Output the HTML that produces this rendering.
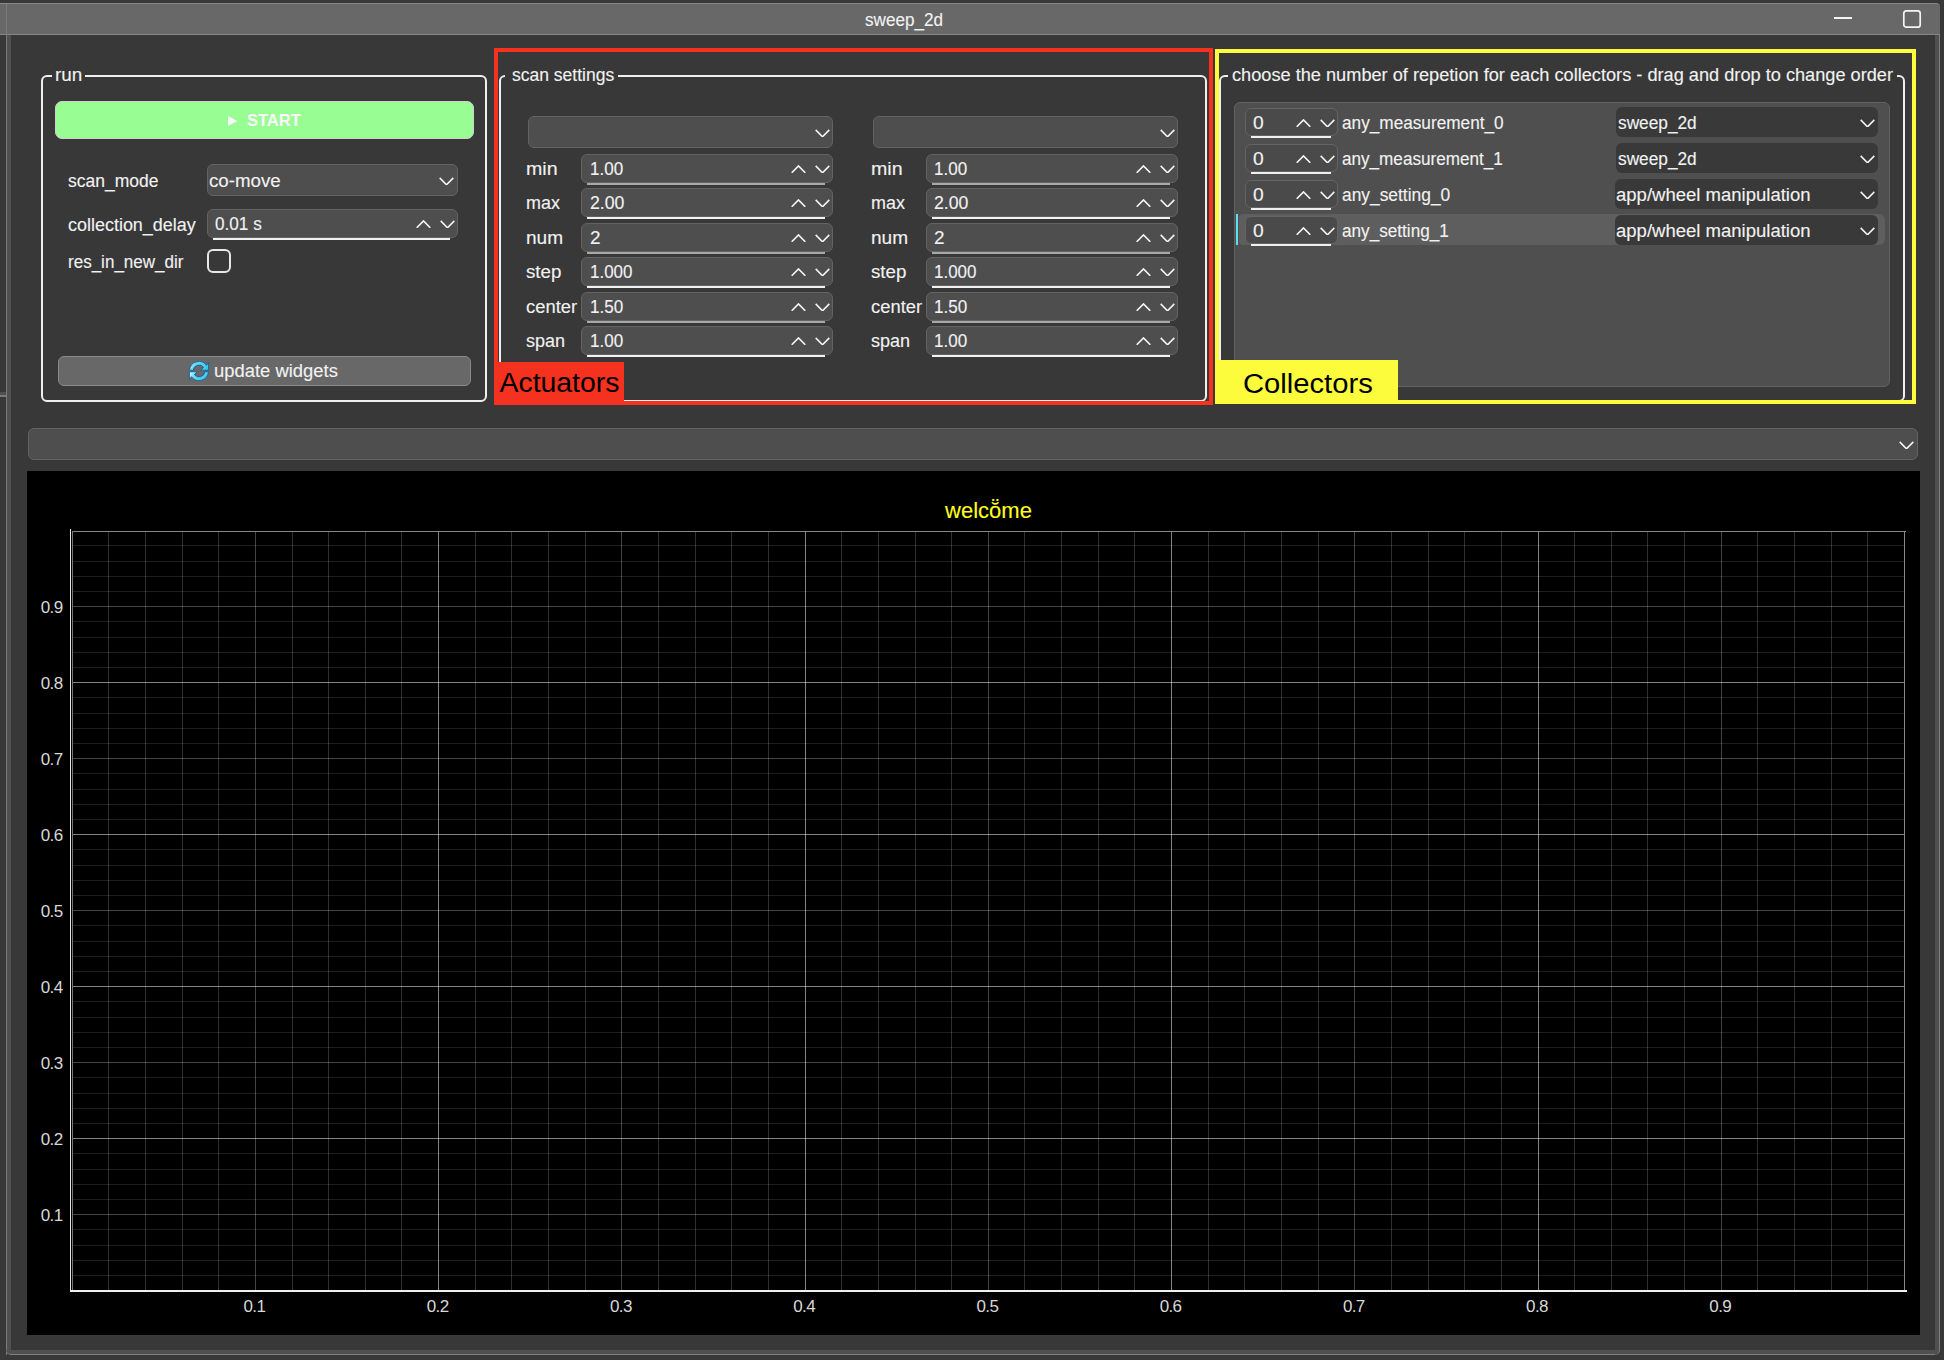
<!DOCTYPE html><html><head><meta charset="utf-8"><style>html,body{margin:0;padding:0;background:#383838;overflow:hidden}#root{position:relative;width:1944px;height:1360px;overflow:hidden;background:#383838;font-family:"Liberation Sans", sans-serif;} .w{-webkit-text-stroke:0.12px currentColor;}</style></head><body><div id="root">
<div style="position:absolute;left:0px;top:3px;width:1940px;height:32px;box-sizing:border-box;background:#686868;border-top:1px solid #878787;border-bottom:1px solid #858585;border-top-right-radius:4px;"></div>
<div style="position:absolute;left:6px;top:4px;width:1px;height:1351px;background:#7a7a7a;"></div>
<div style="position:absolute;left:7px;top:35px;width:4px;height:1316px;background:#505050;"></div>
<div style="position:absolute;left:6px;top:1350px;width:1933px;height:5px;box-sizing:border-box;background:#505050;border-bottom:1px solid #7e7e7e;border-bottom-left-radius:6px;border-bottom-right-radius:6px;"></div>
<div style="position:absolute;left:1935px;top:35px;width:5px;height:1320px;box-sizing:border-box;background:#505050;border-right:1px solid #7e7e7e;border-bottom-right-radius:6px;"></div>
<div style="position:absolute;left:0px;top:392px;width:6px;height:3px;background:#505050;"></div>
<div style="position:absolute;left:0px;top:395px;width:6px;height:2px;background:#7a7a7a;"></div>
<div class="w" style="position:absolute;left:703.5px;width:400px;top:9.61px;font-size:18px;line-height:20.7px;color:#f2f2f2;font-weight:normal;white-space:pre;text-align:center;transform-origin:50% 0;transform:scaleX(0.95);">sweep_2d</div>
<div style="position:absolute;left:1834px;top:17px;width:18px;height:2px;background:#f4f4f4;"></div>
<svg style="position:absolute;left:1902px;top:9px" width="20" height="20" viewBox="0 0 20 20"><rect x="1.8" y="1.8" width="16.4" height="16.4" rx="2.5" fill="none" stroke="#f4f4f4" stroke-width="1.7"/></svg>
<div style="position:absolute;left:41px;top:75px;width:446px;height:327px;box-sizing:border-box;border:2px solid #efefef;border-radius:6px;"></div>
<div style="position:absolute;left:52px;top:73px;width:33px;height:6px;background:#383838;"></div>
<div class="w" style="position:absolute;left:55px;top:65.07px;font-size:17.5px;line-height:20.125px;color:#f2f2f2;font-weight:normal;white-space:pre;transform-origin:0 0;transform:scaleX(1.08);">run</div>
<div style="position:absolute;left:55px;top:101px;width:419px;height:38px;box-sizing:border-box;background:#98fd92;border:1px solid #d4cfd4;border-radius:7px;"></div>
<svg style="position:absolute;left:228px;top:116px" width="10" height="10" viewBox="0 0 10 10"><path d="M0 0 L9.5 5 L0 10 Z" fill="#f7f7f7"/></svg>
<div class="w" style="position:absolute;left:247px;top:111.30px;font-size:16.5px;line-height:18.975px;color:#f7f7f7;font-weight:bold;white-space:pre;transform-origin:0 0;">START</div>
<div class="w" style="position:absolute;left:68px;top:171.17px;font-size:17.5px;line-height:20.125px;color:#f2f2f2;font-weight:normal;white-space:pre;transform-origin:0 0;">scan_mode</div>
<div style="position:absolute;left:207px;top:164px;width:251px;height:32px;box-sizing:border-box;background:#4e4e4e;border:1px solid #636363;border-radius:6px;"></div>
<svg style="position:absolute;left:438.7px;top:177.1px" width="15" height="8" viewBox="0 0 15 8"><path d="M0.7 0.9 L7.5 7.8 L14.3 0.9" fill="none" stroke="#f6f6f6" stroke-width="1.55" stroke-linecap="butt" stroke-linejoin="miter"/></svg>
<div class="w" style="position:absolute;left:209px;top:170.87px;font-size:17.5px;line-height:20.125px;color:#f2f2f2;font-weight:normal;white-space:pre;transform-origin:0 0;transform:scaleX(1.068);">co-move</div>
<div class="w" style="position:absolute;left:68px;top:214.87px;font-size:17.5px;line-height:20.125px;color:#f2f2f2;font-weight:normal;white-space:pre;transform-origin:0 0;transform:scaleX(1.026);">collection_delay</div>
<div style="position:absolute;left:207px;top:209px;width:251px;height:29px;box-sizing:border-box;background:#4e4e4e;border:1px solid #636363;border-radius:6px;"></div>
<svg style="position:absolute;left:415.5px;top:220px" width="15" height="8" viewBox="0 0 15 8"><path d="M0.7 7.8 L7.5 0.9 L14.3 7.8" fill="none" stroke="#f6f6f6" stroke-width="1.55" stroke-linecap="butt" stroke-linejoin="miter"/></svg>
<svg style="position:absolute;left:439.5px;top:220px" width="15" height="8" viewBox="0 0 15 8"><path d="M0.7 0.9 L7.5 7.8 L14.3 0.9" fill="none" stroke="#f6f6f6" stroke-width="1.55" stroke-linecap="butt" stroke-linejoin="miter"/></svg>
<div style="position:absolute;left:213px;top:238px;width:237px;height:2px;background:#f2f2f2;"></div>
<div class="w" style="position:absolute;left:215px;top:214.07px;font-size:17.5px;line-height:20.125px;color:#f2f2f2;font-weight:normal;white-space:pre;transform-origin:0 0;transform:scaleX(0.98);">0.01 s</div>
<div class="w" style="position:absolute;left:68px;top:251.87px;font-size:17.5px;line-height:20.125px;color:#f2f2f2;font-weight:normal;white-space:pre;transform-origin:0 0;transform:scaleX(0.973);">res_in_new_dir</div>
<div style="position:absolute;left:207px;top:249px;width:24px;height:24px;box-sizing:border-box;border:2px solid #e8e8e8;border-radius:6px;"></div>
<div style="position:absolute;left:58px;top:356px;width:413px;height:30px;box-sizing:border-box;background:#686868;border:1px solid #8a8a8a;border-radius:6px;"></div>
<svg style="position:absolute;left:188px;top:359.5px" width="22" height="22" viewBox="0 0 22 22"><defs><linearGradient id="rg" x1="0" y1="0" x2="1" y2="0.3"><stop offset="0" stop-color="#f4fcff"/><stop offset="0.35" stop-color="#62dcf6"/><stop offset="1" stop-color="#3ec8f0"/></linearGradient></defs><g stroke="#1d5e92" stroke-width="0.9" stroke-linejoin="miter" fill="url(#rg)"><path d="M1.5 10.3 A9.5 9.5 0 0 1 18.6 5.3 L20.6 2 L20.6 10.2 L12.6 10.2 L15.6 7.4 A5.8 5.8 0 0 0 5.2 10.3 Z"/><path d="M20.5 11.7 A9.5 9.5 0 0 1 3.4 16.7 L1.4 20 L1.4 11.8 L9.4 11.8 L6.4 14.6 A5.8 5.8 0 0 0 16.8 11.7 Z"/></g></svg>
<div class="w" style="position:absolute;left:213.5px;top:361.37px;font-size:17.5px;line-height:20.125px;color:#f2f2f2;font-weight:normal;white-space:pre;transform-origin:0 0;transform:scaleX(1.052);">update widgets</div>
<div style="position:absolute;left:499px;top:75px;width:708px;height:327px;box-sizing:border-box;border:2px solid #efefef;border-radius:6px;"></div>
<div style="position:absolute;left:505px;top:73px;width:113px;height:6px;background:#383838;"></div>
<div class="w" style="position:absolute;left:512px;top:64.87px;font-size:17.5px;line-height:20.125px;color:#f2f2f2;font-weight:normal;white-space:pre;transform-origin:0 0;">scan settings</div>
<div style="position:absolute;left:494px;top:48px;width:719px;height:357px;box-sizing:border-box;border:4px solid #f5311f;"></div>
<div style="position:absolute;left:528px;top:116px;width:305px;height:32px;box-sizing:border-box;background:#4e4e4e;border:1px solid #636363;border-radius:6px;"></div>
<svg style="position:absolute;left:814.5px;top:128.6px" width="15" height="8" viewBox="0 0 15 8"><path d="M0.7 0.9 L7.5 7.8 L14.3 0.9" fill="none" stroke="#f6f6f6" stroke-width="1.55" stroke-linecap="butt" stroke-linejoin="miter"/></svg>
<div style="position:absolute;left:873px;top:116px;width:305px;height:32px;box-sizing:border-box;background:#4e4e4e;border:1px solid #636363;border-radius:6px;"></div>
<svg style="position:absolute;left:1159.5px;top:128.6px" width="15" height="8" viewBox="0 0 15 8"><path d="M0.7 0.9 L7.5 7.8 L14.3 0.9" fill="none" stroke="#f6f6f6" stroke-width="1.55" stroke-linecap="butt" stroke-linejoin="miter"/></svg>
<div class="w" style="position:absolute;left:525.5px;top:158.87px;font-size:17.5px;line-height:20.125px;color:#f2f2f2;font-weight:normal;white-space:pre;transform-origin:0 0;transform:scaleX(1.12);">min</div>
<div style="position:absolute;left:581px;top:154px;width:252px;height:29px;box-sizing:border-box;background:#4e4e4e;border:1px solid #636363;border-radius:6px;"></div>
<svg style="position:absolute;left:790.5px;top:165px" width="15" height="8" viewBox="0 0 15 8"><path d="M0.7 7.8 L7.5 0.9 L14.3 7.8" fill="none" stroke="#f6f6f6" stroke-width="1.55" stroke-linecap="butt" stroke-linejoin="miter"/></svg>
<svg style="position:absolute;left:814.5px;top:165px" width="15" height="8" viewBox="0 0 15 8"><path d="M0.7 0.9 L7.5 7.8 L14.3 0.9" fill="none" stroke="#f6f6f6" stroke-width="1.55" stroke-linecap="butt" stroke-linejoin="miter"/></svg>
<div style="position:absolute;left:587px;top:183px;width:238px;height:2px;background:#a8a8a8;"></div>
<div class="w" style="position:absolute;left:589.5px;top:158.87px;font-size:17.5px;line-height:20.125px;color:#f2f2f2;font-weight:normal;white-space:pre;transform-origin:0 0;transform:scaleX(0.975);">1.00</div>
<div class="w" style="position:absolute;left:870.5px;top:158.87px;font-size:17.5px;line-height:20.125px;color:#f2f2f2;font-weight:normal;white-space:pre;transform-origin:0 0;transform:scaleX(1.12);">min</div>
<div style="position:absolute;left:926px;top:154px;width:252px;height:29px;box-sizing:border-box;background:#4e4e4e;border:1px solid #636363;border-radius:6px;"></div>
<svg style="position:absolute;left:1135.5px;top:165px" width="15" height="8" viewBox="0 0 15 8"><path d="M0.7 7.8 L7.5 0.9 L14.3 7.8" fill="none" stroke="#f6f6f6" stroke-width="1.55" stroke-linecap="butt" stroke-linejoin="miter"/></svg>
<svg style="position:absolute;left:1159.5px;top:165px" width="15" height="8" viewBox="0 0 15 8"><path d="M0.7 0.9 L7.5 7.8 L14.3 0.9" fill="none" stroke="#f6f6f6" stroke-width="1.55" stroke-linecap="butt" stroke-linejoin="miter"/></svg>
<div style="position:absolute;left:932px;top:183px;width:238px;height:2px;background:#a8a8a8;"></div>
<div class="w" style="position:absolute;left:934px;top:158.87px;font-size:17.5px;line-height:20.125px;color:#f2f2f2;font-weight:normal;white-space:pre;transform-origin:0 0;transform:scaleX(0.975);">1.00</div>
<div class="w" style="position:absolute;left:525.5px;top:192.87px;font-size:17.5px;line-height:20.125px;color:#f2f2f2;font-weight:normal;white-space:pre;transform-origin:0 0;transform:scaleX(1.025);">max</div>
<div style="position:absolute;left:581px;top:188px;width:252px;height:29px;box-sizing:border-box;background:#4e4e4e;border:1px solid #636363;border-radius:6px;"></div>
<svg style="position:absolute;left:790.5px;top:199px" width="15" height="8" viewBox="0 0 15 8"><path d="M0.7 7.8 L7.5 0.9 L14.3 7.8" fill="none" stroke="#f6f6f6" stroke-width="1.55" stroke-linecap="butt" stroke-linejoin="miter"/></svg>
<svg style="position:absolute;left:814.5px;top:199px" width="15" height="8" viewBox="0 0 15 8"><path d="M0.7 0.9 L7.5 7.8 L14.3 0.9" fill="none" stroke="#f6f6f6" stroke-width="1.55" stroke-linecap="butt" stroke-linejoin="miter"/></svg>
<div style="position:absolute;left:587px;top:217px;width:238px;height:2px;background:#f2f2f2;"></div>
<div class="w" style="position:absolute;left:589.5px;top:192.87px;font-size:17.5px;line-height:20.125px;color:#f2f2f2;font-weight:normal;white-space:pre;transform-origin:0 0;transform:scaleX(1.01);">2.00</div>
<div class="w" style="position:absolute;left:870.5px;top:192.87px;font-size:17.5px;line-height:20.125px;color:#f2f2f2;font-weight:normal;white-space:pre;transform-origin:0 0;transform:scaleX(1.025);">max</div>
<div style="position:absolute;left:926px;top:188px;width:252px;height:29px;box-sizing:border-box;background:#4e4e4e;border:1px solid #636363;border-radius:6px;"></div>
<svg style="position:absolute;left:1135.5px;top:199px" width="15" height="8" viewBox="0 0 15 8"><path d="M0.7 7.8 L7.5 0.9 L14.3 7.8" fill="none" stroke="#f6f6f6" stroke-width="1.55" stroke-linecap="butt" stroke-linejoin="miter"/></svg>
<svg style="position:absolute;left:1159.5px;top:199px" width="15" height="8" viewBox="0 0 15 8"><path d="M0.7 0.9 L7.5 7.8 L14.3 0.9" fill="none" stroke="#f6f6f6" stroke-width="1.55" stroke-linecap="butt" stroke-linejoin="miter"/></svg>
<div style="position:absolute;left:932px;top:217px;width:238px;height:2px;background:#f2f2f2;"></div>
<div class="w" style="position:absolute;left:934px;top:192.87px;font-size:17.5px;line-height:20.125px;color:#f2f2f2;font-weight:normal;white-space:pre;transform-origin:0 0;transform:scaleX(1.01);">2.00</div>
<div class="w" style="position:absolute;left:525.5px;top:227.87px;font-size:17.5px;line-height:20.125px;color:#f2f2f2;font-weight:normal;white-space:pre;transform-origin:0 0;transform:scaleX(1.09);">num</div>
<div style="position:absolute;left:581px;top:223px;width:252px;height:29px;box-sizing:border-box;background:#4e4e4e;border:1px solid #636363;border-radius:6px;"></div>
<svg style="position:absolute;left:790.5px;top:234px" width="15" height="8" viewBox="0 0 15 8"><path d="M0.7 7.8 L7.5 0.9 L14.3 7.8" fill="none" stroke="#f6f6f6" stroke-width="1.55" stroke-linecap="butt" stroke-linejoin="miter"/></svg>
<svg style="position:absolute;left:814.5px;top:234px" width="15" height="8" viewBox="0 0 15 8"><path d="M0.7 0.9 L7.5 7.8 L14.3 0.9" fill="none" stroke="#f6f6f6" stroke-width="1.55" stroke-linecap="butt" stroke-linejoin="miter"/></svg>
<div style="position:absolute;left:587px;top:252px;width:238px;height:2px;background:#a8a8a8;"></div>
<div class="w" style="position:absolute;left:589.5px;top:227.87px;font-size:17.5px;line-height:20.125px;color:#f2f2f2;font-weight:normal;white-space:pre;transform-origin:0 0;transform:scaleX(1.08);">2</div>
<div class="w" style="position:absolute;left:870.5px;top:227.87px;font-size:17.5px;line-height:20.125px;color:#f2f2f2;font-weight:normal;white-space:pre;transform-origin:0 0;transform:scaleX(1.09);">num</div>
<div style="position:absolute;left:926px;top:223px;width:252px;height:29px;box-sizing:border-box;background:#4e4e4e;border:1px solid #636363;border-radius:6px;"></div>
<svg style="position:absolute;left:1135.5px;top:234px" width="15" height="8" viewBox="0 0 15 8"><path d="M0.7 7.8 L7.5 0.9 L14.3 7.8" fill="none" stroke="#f6f6f6" stroke-width="1.55" stroke-linecap="butt" stroke-linejoin="miter"/></svg>
<svg style="position:absolute;left:1159.5px;top:234px" width="15" height="8" viewBox="0 0 15 8"><path d="M0.7 0.9 L7.5 7.8 L14.3 0.9" fill="none" stroke="#f6f6f6" stroke-width="1.55" stroke-linecap="butt" stroke-linejoin="miter"/></svg>
<div style="position:absolute;left:932px;top:252px;width:238px;height:2px;background:#a8a8a8;"></div>
<div class="w" style="position:absolute;left:934px;top:227.87px;font-size:17.5px;line-height:20.125px;color:#f2f2f2;font-weight:normal;white-space:pre;transform-origin:0 0;transform:scaleX(1.08);">2</div>
<div class="w" style="position:absolute;left:525.5px;top:261.87px;font-size:17.5px;line-height:20.125px;color:#f2f2f2;font-weight:normal;white-space:pre;transform-origin:0 0;transform:scaleX(1.07);">step</div>
<div style="position:absolute;left:581px;top:257px;width:252px;height:29px;box-sizing:border-box;background:#4e4e4e;border:1px solid #636363;border-radius:6px;"></div>
<svg style="position:absolute;left:790.5px;top:268px" width="15" height="8" viewBox="0 0 15 8"><path d="M0.7 7.8 L7.5 0.9 L14.3 7.8" fill="none" stroke="#f6f6f6" stroke-width="1.55" stroke-linecap="butt" stroke-linejoin="miter"/></svg>
<svg style="position:absolute;left:814.5px;top:268px" width="15" height="8" viewBox="0 0 15 8"><path d="M0.7 0.9 L7.5 7.8 L14.3 0.9" fill="none" stroke="#f6f6f6" stroke-width="1.55" stroke-linecap="butt" stroke-linejoin="miter"/></svg>
<div style="position:absolute;left:587px;top:286px;width:238px;height:2px;background:#f2f2f2;"></div>
<div class="w" style="position:absolute;left:589.5px;top:261.87px;font-size:17.5px;line-height:20.125px;color:#f2f2f2;font-weight:normal;white-space:pre;transform-origin:0 0;transform:scaleX(0.97);">1.000</div>
<div class="w" style="position:absolute;left:870.5px;top:261.87px;font-size:17.5px;line-height:20.125px;color:#f2f2f2;font-weight:normal;white-space:pre;transform-origin:0 0;transform:scaleX(1.07);">step</div>
<div style="position:absolute;left:926px;top:257px;width:252px;height:29px;box-sizing:border-box;background:#4e4e4e;border:1px solid #636363;border-radius:6px;"></div>
<svg style="position:absolute;left:1135.5px;top:268px" width="15" height="8" viewBox="0 0 15 8"><path d="M0.7 7.8 L7.5 0.9 L14.3 7.8" fill="none" stroke="#f6f6f6" stroke-width="1.55" stroke-linecap="butt" stroke-linejoin="miter"/></svg>
<svg style="position:absolute;left:1159.5px;top:268px" width="15" height="8" viewBox="0 0 15 8"><path d="M0.7 0.9 L7.5 7.8 L14.3 0.9" fill="none" stroke="#f6f6f6" stroke-width="1.55" stroke-linecap="butt" stroke-linejoin="miter"/></svg>
<div style="position:absolute;left:932px;top:286px;width:238px;height:2px;background:#f2f2f2;"></div>
<div class="w" style="position:absolute;left:934px;top:261.87px;font-size:17.5px;line-height:20.125px;color:#f2f2f2;font-weight:normal;white-space:pre;transform-origin:0 0;transform:scaleX(0.97);">1.000</div>
<div class="w" style="position:absolute;left:525.5px;top:296.87px;font-size:17.5px;line-height:20.125px;color:#f2f2f2;font-weight:normal;white-space:pre;transform-origin:0 0;transform:scaleX(1.05);">center</div>
<div style="position:absolute;left:581px;top:292px;width:252px;height:29px;box-sizing:border-box;background:#4e4e4e;border:1px solid #636363;border-radius:6px;"></div>
<svg style="position:absolute;left:790.5px;top:303px" width="15" height="8" viewBox="0 0 15 8"><path d="M0.7 7.8 L7.5 0.9 L14.3 7.8" fill="none" stroke="#f6f6f6" stroke-width="1.55" stroke-linecap="butt" stroke-linejoin="miter"/></svg>
<svg style="position:absolute;left:814.5px;top:303px" width="15" height="8" viewBox="0 0 15 8"><path d="M0.7 0.9 L7.5 7.8 L14.3 0.9" fill="none" stroke="#f6f6f6" stroke-width="1.55" stroke-linecap="butt" stroke-linejoin="miter"/></svg>
<div style="position:absolute;left:587px;top:321px;width:238px;height:2px;background:#a8a8a8;"></div>
<div class="w" style="position:absolute;left:589.5px;top:296.87px;font-size:17.5px;line-height:20.125px;color:#f2f2f2;font-weight:normal;white-space:pre;transform-origin:0 0;transform:scaleX(0.975);">1.50</div>
<div class="w" style="position:absolute;left:870.5px;top:296.87px;font-size:17.5px;line-height:20.125px;color:#f2f2f2;font-weight:normal;white-space:pre;transform-origin:0 0;transform:scaleX(1.05);">center</div>
<div style="position:absolute;left:926px;top:292px;width:252px;height:29px;box-sizing:border-box;background:#4e4e4e;border:1px solid #636363;border-radius:6px;"></div>
<svg style="position:absolute;left:1135.5px;top:303px" width="15" height="8" viewBox="0 0 15 8"><path d="M0.7 7.8 L7.5 0.9 L14.3 7.8" fill="none" stroke="#f6f6f6" stroke-width="1.55" stroke-linecap="butt" stroke-linejoin="miter"/></svg>
<svg style="position:absolute;left:1159.5px;top:303px" width="15" height="8" viewBox="0 0 15 8"><path d="M0.7 0.9 L7.5 7.8 L14.3 0.9" fill="none" stroke="#f6f6f6" stroke-width="1.55" stroke-linecap="butt" stroke-linejoin="miter"/></svg>
<div style="position:absolute;left:932px;top:321px;width:238px;height:2px;background:#a8a8a8;"></div>
<div class="w" style="position:absolute;left:934px;top:296.87px;font-size:17.5px;line-height:20.125px;color:#f2f2f2;font-weight:normal;white-space:pre;transform-origin:0 0;transform:scaleX(0.975);">1.50</div>
<div class="w" style="position:absolute;left:525.5px;top:330.87px;font-size:17.5px;line-height:20.125px;color:#f2f2f2;font-weight:normal;white-space:pre;transform-origin:0 0;transform:scaleX(1.03);">span</div>
<div style="position:absolute;left:581px;top:326px;width:252px;height:29px;box-sizing:border-box;background:#4e4e4e;border:1px solid #636363;border-radius:6px;"></div>
<svg style="position:absolute;left:790.5px;top:337px" width="15" height="8" viewBox="0 0 15 8"><path d="M0.7 7.8 L7.5 0.9 L14.3 7.8" fill="none" stroke="#f6f6f6" stroke-width="1.55" stroke-linecap="butt" stroke-linejoin="miter"/></svg>
<svg style="position:absolute;left:814.5px;top:337px" width="15" height="8" viewBox="0 0 15 8"><path d="M0.7 0.9 L7.5 7.8 L14.3 0.9" fill="none" stroke="#f6f6f6" stroke-width="1.55" stroke-linecap="butt" stroke-linejoin="miter"/></svg>
<div style="position:absolute;left:587px;top:355px;width:238px;height:2px;background:#f2f2f2;"></div>
<div class="w" style="position:absolute;left:589.5px;top:330.87px;font-size:17.5px;line-height:20.125px;color:#f2f2f2;font-weight:normal;white-space:pre;transform-origin:0 0;transform:scaleX(0.975);">1.00</div>
<div class="w" style="position:absolute;left:870.5px;top:330.87px;font-size:17.5px;line-height:20.125px;color:#f2f2f2;font-weight:normal;white-space:pre;transform-origin:0 0;transform:scaleX(1.03);">span</div>
<div style="position:absolute;left:926px;top:326px;width:252px;height:29px;box-sizing:border-box;background:#4e4e4e;border:1px solid #636363;border-radius:6px;"></div>
<svg style="position:absolute;left:1135.5px;top:337px" width="15" height="8" viewBox="0 0 15 8"><path d="M0.7 7.8 L7.5 0.9 L14.3 7.8" fill="none" stroke="#f6f6f6" stroke-width="1.55" stroke-linecap="butt" stroke-linejoin="miter"/></svg>
<svg style="position:absolute;left:1159.5px;top:337px" width="15" height="8" viewBox="0 0 15 8"><path d="M0.7 0.9 L7.5 7.8 L14.3 0.9" fill="none" stroke="#f6f6f6" stroke-width="1.55" stroke-linecap="butt" stroke-linejoin="miter"/></svg>
<div style="position:absolute;left:932px;top:355px;width:238px;height:2px;background:#f2f2f2;"></div>
<div class="w" style="position:absolute;left:934px;top:330.87px;font-size:17.5px;line-height:20.125px;color:#f2f2f2;font-weight:normal;white-space:pre;transform-origin:0 0;transform:scaleX(0.975);">1.00</div>
<div style="position:absolute;left:494px;top:362px;width:130px;height:43px;background:#f5311f;"></div>
<div style="position:absolute;left:499.5px;top:366.03px;font-size:28.4px;line-height:32.66px;color:#000;font-weight:normal;white-space:pre;transform-origin:0 0;">Actuators</div>
<div style="position:absolute;left:1219px;top:75px;width:686px;height:327px;box-sizing:border-box;border:2px solid #efefef;border-radius:6px;"></div>
<div style="position:absolute;left:1228px;top:73px;width:669px;height:6px;background:#383838;"></div>
<div class="w" style="position:absolute;left:1232px;top:64.87px;font-size:17.5px;line-height:20.125px;color:#f2f2f2;font-weight:normal;white-space:pre;transform-origin:0 0;transform:scaleX(1.039);">choose the number of repetion for each collectors - drag and drop to change order</div>
<div style="position:absolute;left:1234px;top:102px;width:656px;height:285px;box-sizing:border-box;background:#4f4f4f;border:1px solid #626262;border-radius:6px;"></div>
<div style="position:absolute;left:1239px;top:214px;width:1647px;height:31px;"></div>
<div style="position:absolute;left:1239px;top:214px;width:646px;height:31px;background:#5e5e5e;border-radius:4px 6px 6px 4px;"></div>
<div style="position:absolute;left:1236px;top:214px;width:2px;height:31px;background:#5ce0ee;"></div>
<div style="position:absolute;left:1245px;top:107.5px;width:93px;height:28px;box-sizing:border-box;background:#4a4a4a;border:1px solid #646464;border-radius:6px;"></div>
<svg style="position:absolute;left:1296px;top:118.5px" width="15" height="8" viewBox="0 0 15 8"><path d="M0.7 7.8 L7.5 0.9 L14.3 7.8" fill="none" stroke="#f6f6f6" stroke-width="1.55" stroke-linecap="butt" stroke-linejoin="miter"/></svg>
<svg style="position:absolute;left:1319.8px;top:118.5px" width="15" height="8" viewBox="0 0 15 8"><path d="M0.7 0.9 L7.5 7.8 L14.3 0.9" fill="none" stroke="#f6f6f6" stroke-width="1.55" stroke-linecap="butt" stroke-linejoin="miter"/></svg>
<div style="position:absolute;left:1251px;top:135.5px;width:80px;height:2px;background:#f0f0f0;"></div>
<div class="w" style="position:absolute;left:1253px;top:113.17px;font-size:17.5px;line-height:20.125px;color:#f2f2f2;font-weight:normal;white-space:pre;transform-origin:0 0;transform:scaleX(1.1);">0</div>
<div class="w" style="position:absolute;left:1341.5px;top:113.17px;font-size:17.5px;line-height:20.125px;color:#f2f2f2;font-weight:normal;white-space:pre;transform-origin:0 0;transform:scaleX(0.983);">any_measurement_0</div>
<div style="position:absolute;left:1616px;top:106.5px;width:262px;height:30px;background:#393939;border-radius:6px;"></div>
<svg style="position:absolute;left:1860px;top:118.8px" width="15" height="8" viewBox="0 0 15 8"><path d="M0.7 0.9 L7.5 7.8 L14.3 0.9" fill="none" stroke="#f6f6f6" stroke-width="1.55" stroke-linecap="butt" stroke-linejoin="miter"/></svg>
<div class="w" style="position:absolute;left:1618px;top:112.77px;font-size:17.5px;line-height:20.125px;color:#f2f2f2;font-weight:normal;white-space:pre;transform-origin:0 0;transform:scaleX(0.986);">sweep_2d</div>
<div style="position:absolute;left:1245px;top:143.5px;width:93px;height:28px;box-sizing:border-box;background:#4a4a4a;border:1px solid #646464;border-radius:6px;"></div>
<svg style="position:absolute;left:1296px;top:154.5px" width="15" height="8" viewBox="0 0 15 8"><path d="M0.7 7.8 L7.5 0.9 L14.3 7.8" fill="none" stroke="#f6f6f6" stroke-width="1.55" stroke-linecap="butt" stroke-linejoin="miter"/></svg>
<svg style="position:absolute;left:1319.8px;top:154.5px" width="15" height="8" viewBox="0 0 15 8"><path d="M0.7 0.9 L7.5 7.8 L14.3 0.9" fill="none" stroke="#f6f6f6" stroke-width="1.55" stroke-linecap="butt" stroke-linejoin="miter"/></svg>
<div style="position:absolute;left:1251px;top:171.5px;width:80px;height:2px;background:#f0f0f0;"></div>
<div class="w" style="position:absolute;left:1253px;top:149.17px;font-size:17.5px;line-height:20.125px;color:#f2f2f2;font-weight:normal;white-space:pre;transform-origin:0 0;transform:scaleX(1.1);">0</div>
<div class="w" style="position:absolute;left:1341.5px;top:149.17px;font-size:17.5px;line-height:20.125px;color:#f2f2f2;font-weight:normal;white-space:pre;transform-origin:0 0;transform:scaleX(0.978);">any_measurement_1</div>
<div style="position:absolute;left:1616px;top:142.5px;width:262px;height:30px;background:#393939;border-radius:6px;"></div>
<svg style="position:absolute;left:1860px;top:154.8px" width="15" height="8" viewBox="0 0 15 8"><path d="M0.7 0.9 L7.5 7.8 L14.3 0.9" fill="none" stroke="#f6f6f6" stroke-width="1.55" stroke-linecap="butt" stroke-linejoin="miter"/></svg>
<div class="w" style="position:absolute;left:1618px;top:148.77px;font-size:17.5px;line-height:20.125px;color:#f2f2f2;font-weight:normal;white-space:pre;transform-origin:0 0;transform:scaleX(0.986);">sweep_2d</div>
<div style="position:absolute;left:1245px;top:179.5px;width:93px;height:28px;box-sizing:border-box;background:#4a4a4a;border:1px solid #646464;border-radius:6px;"></div>
<svg style="position:absolute;left:1296px;top:190.5px" width="15" height="8" viewBox="0 0 15 8"><path d="M0.7 7.8 L7.5 0.9 L14.3 7.8" fill="none" stroke="#f6f6f6" stroke-width="1.55" stroke-linecap="butt" stroke-linejoin="miter"/></svg>
<svg style="position:absolute;left:1319.8px;top:190.5px" width="15" height="8" viewBox="0 0 15 8"><path d="M0.7 0.9 L7.5 7.8 L14.3 0.9" fill="none" stroke="#f6f6f6" stroke-width="1.55" stroke-linecap="butt" stroke-linejoin="miter"/></svg>
<div style="position:absolute;left:1251px;top:207.5px;width:80px;height:2px;background:#f0f0f0;"></div>
<div class="w" style="position:absolute;left:1253px;top:185.17px;font-size:17.5px;line-height:20.125px;color:#f2f2f2;font-weight:normal;white-space:pre;transform-origin:0 0;transform:scaleX(1.1);">0</div>
<div class="w" style="position:absolute;left:1341.5px;top:185.17px;font-size:17.5px;line-height:20.125px;color:#f2f2f2;font-weight:normal;white-space:pre;transform-origin:0 0;transform:scaleX(0.993);">any_setting_0</div>
<div style="position:absolute;left:1615px;top:178.5px;width:263px;height:30px;background:#393939;border-radius:6px;"></div>
<svg style="position:absolute;left:1860px;top:190.8px" width="15" height="8" viewBox="0 0 15 8"><path d="M0.7 0.9 L7.5 7.8 L14.3 0.9" fill="none" stroke="#f6f6f6" stroke-width="1.55" stroke-linecap="butt" stroke-linejoin="miter"/></svg>
<div class="w" style="position:absolute;left:1616px;top:184.77px;font-size:17.5px;line-height:20.125px;color:#f2f2f2;font-weight:normal;white-space:pre;transform-origin:0 0;transform:scaleX(1.058);">app/wheel manipulation</div>
<div style="position:absolute;left:1245px;top:215.5px;width:93px;height:28px;box-sizing:border-box;background:#4a4a4a;border:1px solid #646464;border-radius:6px;"></div>
<svg style="position:absolute;left:1296px;top:226.5px" width="15" height="8" viewBox="0 0 15 8"><path d="M0.7 7.8 L7.5 0.9 L14.3 7.8" fill="none" stroke="#f6f6f6" stroke-width="1.55" stroke-linecap="butt" stroke-linejoin="miter"/></svg>
<svg style="position:absolute;left:1319.8px;top:226.5px" width="15" height="8" viewBox="0 0 15 8"><path d="M0.7 0.9 L7.5 7.8 L14.3 0.9" fill="none" stroke="#f6f6f6" stroke-width="1.55" stroke-linecap="butt" stroke-linejoin="miter"/></svg>
<div style="position:absolute;left:1251px;top:243.5px;width:80px;height:2px;background:#f0f0f0;"></div>
<div class="w" style="position:absolute;left:1253px;top:221.17px;font-size:17.5px;line-height:20.125px;color:#f2f2f2;font-weight:normal;white-space:pre;transform-origin:0 0;transform:scaleX(1.1);">0</div>
<div class="w" style="position:absolute;left:1341.5px;top:221.17px;font-size:17.5px;line-height:20.125px;color:#f2f2f2;font-weight:normal;white-space:pre;transform-origin:0 0;transform:scaleX(0.98);">any_setting_1</div>
<div style="position:absolute;left:1615px;top:214.5px;width:263px;height:30px;background:#393939;border-radius:6px;"></div>
<svg style="position:absolute;left:1860px;top:226.8px" width="15" height="8" viewBox="0 0 15 8"><path d="M0.7 0.9 L7.5 7.8 L14.3 0.9" fill="none" stroke="#f6f6f6" stroke-width="1.55" stroke-linecap="butt" stroke-linejoin="miter"/></svg>
<div class="w" style="position:absolute;left:1616px;top:220.77px;font-size:17.5px;line-height:20.125px;color:#f2f2f2;font-weight:normal;white-space:pre;transform-origin:0 0;transform:scaleX(1.058);">app/wheel manipulation</div>
<div style="position:absolute;left:1215px;top:49px;width:701px;height:355px;box-sizing:border-box;border:4px solid #fcfc3c;"></div>
<div style="position:absolute;left:1215px;top:360px;width:183px;height:44px;background:#fcfc3c;"></div>
<div style="position:absolute;left:1243px;top:366.53px;font-size:28.4px;line-height:32.66px;color:#000;font-weight:normal;white-space:pre;transform-origin:0 0;transform:scaleX(1.028);">Collectors</div>
<div style="position:absolute;left:28px;top:428px;width:1890px;height:32px;box-sizing:border-box;background:#4e4e4e;border:1px solid #636363;border-radius:6px;"></div>
<svg style="position:absolute;left:1899px;top:441.1px" width="15" height="8" viewBox="0 0 15 8"><path d="M0.7 0.9 L7.5 7.8 L14.3 0.9" fill="none" stroke="#f6f6f6" stroke-width="1.55" stroke-linecap="butt" stroke-linejoin="miter"/></svg>
<div style="position:absolute;left:27px;top:471px;width:1893px;height:864px;background:#000;"></div>
<svg style="position:absolute;left:0;top:0" width="1944" height="1360" viewBox="0 0 1944 1360" shape-rendering="crispEdges"><line x1="108.5" y1="531" x2="108.5" y2="1291" stroke="#fff" stroke-opacity="0.188" stroke-width="1"/><line x1="145.5" y1="531" x2="145.5" y2="1291" stroke="#fff" stroke-opacity="0.188" stroke-width="1"/><line x1="182.5" y1="531" x2="182.5" y2="1291" stroke="#fff" stroke-opacity="0.188" stroke-width="1"/><line x1="218.5" y1="531" x2="218.5" y2="1291" stroke="#fff" stroke-opacity="0.188" stroke-width="1"/><line x1="255.5" y1="531" x2="255.5" y2="1291" stroke="#fff" stroke-opacity="0.267" stroke-width="1"/><line x1="292.5" y1="531" x2="292.5" y2="1291" stroke="#fff" stroke-opacity="0.188" stroke-width="1"/><line x1="328.5" y1="531" x2="328.5" y2="1291" stroke="#fff" stroke-opacity="0.188" stroke-width="1"/><line x1="365.5" y1="531" x2="365.5" y2="1291" stroke="#fff" stroke-opacity="0.188" stroke-width="1"/><line x1="401.5" y1="531" x2="401.5" y2="1291" stroke="#fff" stroke-opacity="0.188" stroke-width="1"/><line x1="438.5" y1="531" x2="438.5" y2="1291" stroke="#fff" stroke-opacity="0.51" stroke-width="1"/><line x1="475.5" y1="531" x2="475.5" y2="1291" stroke="#fff" stroke-opacity="0.188" stroke-width="1"/><line x1="511.5" y1="531" x2="511.5" y2="1291" stroke="#fff" stroke-opacity="0.188" stroke-width="1"/><line x1="548.5" y1="531" x2="548.5" y2="1291" stroke="#fff" stroke-opacity="0.188" stroke-width="1"/><line x1="585.5" y1="531" x2="585.5" y2="1291" stroke="#fff" stroke-opacity="0.188" stroke-width="1"/><line x1="621.5" y1="531" x2="621.5" y2="1291" stroke="#fff" stroke-opacity="0.267" stroke-width="1"/><line x1="658.5" y1="531" x2="658.5" y2="1291" stroke="#fff" stroke-opacity="0.188" stroke-width="1"/><line x1="695.5" y1="531" x2="695.5" y2="1291" stroke="#fff" stroke-opacity="0.188" stroke-width="1"/><line x1="731.5" y1="531" x2="731.5" y2="1291" stroke="#fff" stroke-opacity="0.188" stroke-width="1"/><line x1="768.5" y1="531" x2="768.5" y2="1291" stroke="#fff" stroke-opacity="0.188" stroke-width="1"/><line x1="805.5" y1="531" x2="805.5" y2="1291" stroke="#fff" stroke-opacity="0.51" stroke-width="1"/><line x1="841.5" y1="531" x2="841.5" y2="1291" stroke="#fff" stroke-opacity="0.188" stroke-width="1"/><line x1="878.5" y1="531" x2="878.5" y2="1291" stroke="#fff" stroke-opacity="0.188" stroke-width="1"/><line x1="915.5" y1="531" x2="915.5" y2="1291" stroke="#fff" stroke-opacity="0.188" stroke-width="1"/><line x1="951.5" y1="531" x2="951.5" y2="1291" stroke="#fff" stroke-opacity="0.188" stroke-width="1"/><line x1="988.5" y1="531" x2="988.5" y2="1291" stroke="#fff" stroke-opacity="0.267" stroke-width="1"/><line x1="1024.5" y1="531" x2="1024.5" y2="1291" stroke="#fff" stroke-opacity="0.188" stroke-width="1"/><line x1="1061.5" y1="531" x2="1061.5" y2="1291" stroke="#fff" stroke-opacity="0.188" stroke-width="1"/><line x1="1098.5" y1="531" x2="1098.5" y2="1291" stroke="#fff" stroke-opacity="0.188" stroke-width="1"/><line x1="1134.5" y1="531" x2="1134.5" y2="1291" stroke="#fff" stroke-opacity="0.188" stroke-width="1"/><line x1="1171.5" y1="531" x2="1171.5" y2="1291" stroke="#fff" stroke-opacity="0.51" stroke-width="1"/><line x1="1208.5" y1="531" x2="1208.5" y2="1291" stroke="#fff" stroke-opacity="0.188" stroke-width="1"/><line x1="1244.5" y1="531" x2="1244.5" y2="1291" stroke="#fff" stroke-opacity="0.188" stroke-width="1"/><line x1="1281.5" y1="531" x2="1281.5" y2="1291" stroke="#fff" stroke-opacity="0.188" stroke-width="1"/><line x1="1318.5" y1="531" x2="1318.5" y2="1291" stroke="#fff" stroke-opacity="0.188" stroke-width="1"/><line x1="1354.5" y1="531" x2="1354.5" y2="1291" stroke="#fff" stroke-opacity="0.267" stroke-width="1"/><line x1="1391.5" y1="531" x2="1391.5" y2="1291" stroke="#fff" stroke-opacity="0.188" stroke-width="1"/><line x1="1428.5" y1="531" x2="1428.5" y2="1291" stroke="#fff" stroke-opacity="0.188" stroke-width="1"/><line x1="1464.5" y1="531" x2="1464.5" y2="1291" stroke="#fff" stroke-opacity="0.188" stroke-width="1"/><line x1="1501.5" y1="531" x2="1501.5" y2="1291" stroke="#fff" stroke-opacity="0.188" stroke-width="1"/><line x1="1538.5" y1="531" x2="1538.5" y2="1291" stroke="#fff" stroke-opacity="0.51" stroke-width="1"/><line x1="1574.5" y1="531" x2="1574.5" y2="1291" stroke="#fff" stroke-opacity="0.188" stroke-width="1"/><line x1="1611.5" y1="531" x2="1611.5" y2="1291" stroke="#fff" stroke-opacity="0.188" stroke-width="1"/><line x1="1647.5" y1="531" x2="1647.5" y2="1291" stroke="#fff" stroke-opacity="0.188" stroke-width="1"/><line x1="1684.5" y1="531" x2="1684.5" y2="1291" stroke="#fff" stroke-opacity="0.188" stroke-width="1"/><line x1="1721.5" y1="531" x2="1721.5" y2="1291" stroke="#fff" stroke-opacity="0.267" stroke-width="1"/><line x1="1757.5" y1="531" x2="1757.5" y2="1291" stroke="#fff" stroke-opacity="0.188" stroke-width="1"/><line x1="1794.5" y1="531" x2="1794.5" y2="1291" stroke="#fff" stroke-opacity="0.188" stroke-width="1"/><line x1="1831.5" y1="531" x2="1831.5" y2="1291" stroke="#fff" stroke-opacity="0.188" stroke-width="1"/><line x1="1867.5" y1="531" x2="1867.5" y2="1291" stroke="#fff" stroke-opacity="0.188" stroke-width="1"/><line x1="72" y1="1275.5" x2="1905" y2="1275.5" stroke="#fff" stroke-opacity="0.122" stroke-width="1"/><line x1="72" y1="1260.5" x2="1905" y2="1260.5" stroke="#fff" stroke-opacity="0.122" stroke-width="1"/><line x1="72" y1="1245.5" x2="1905" y2="1245.5" stroke="#fff" stroke-opacity="0.122" stroke-width="1"/><line x1="72" y1="1229.5" x2="1905" y2="1229.5" stroke="#fff" stroke-opacity="0.122" stroke-width="1"/><line x1="72" y1="1214.5" x2="1905" y2="1214.5" stroke="#fff" stroke-opacity="0.267" stroke-width="1"/><line x1="72" y1="1199.5" x2="1905" y2="1199.5" stroke="#fff" stroke-opacity="0.122" stroke-width="1"/><line x1="72" y1="1184.5" x2="1905" y2="1184.5" stroke="#fff" stroke-opacity="0.122" stroke-width="1"/><line x1="72" y1="1169.5" x2="1905" y2="1169.5" stroke="#fff" stroke-opacity="0.122" stroke-width="1"/><line x1="72" y1="1153.5" x2="1905" y2="1153.5" stroke="#fff" stroke-opacity="0.122" stroke-width="1"/><line x1="72" y1="1138.5" x2="1905" y2="1138.5" stroke="#fff" stroke-opacity="0.51" stroke-width="1"/><line x1="72" y1="1123.5" x2="1905" y2="1123.5" stroke="#fff" stroke-opacity="0.122" stroke-width="1"/><line x1="72" y1="1108.5" x2="1905" y2="1108.5" stroke="#fff" stroke-opacity="0.122" stroke-width="1"/><line x1="72" y1="1093.5" x2="1905" y2="1093.5" stroke="#fff" stroke-opacity="0.122" stroke-width="1"/><line x1="72" y1="1077.5" x2="1905" y2="1077.5" stroke="#fff" stroke-opacity="0.122" stroke-width="1"/><line x1="72" y1="1062.5" x2="1905" y2="1062.5" stroke="#fff" stroke-opacity="0.267" stroke-width="1"/><line x1="72" y1="1047.5" x2="1905" y2="1047.5" stroke="#fff" stroke-opacity="0.122" stroke-width="1"/><line x1="72" y1="1032.5" x2="1905" y2="1032.5" stroke="#fff" stroke-opacity="0.122" stroke-width="1"/><line x1="72" y1="1017.5" x2="1905" y2="1017.5" stroke="#fff" stroke-opacity="0.122" stroke-width="1"/><line x1="72" y1="1001.5" x2="1905" y2="1001.5" stroke="#fff" stroke-opacity="0.122" stroke-width="1"/><line x1="72" y1="986.5" x2="1905" y2="986.5" stroke="#fff" stroke-opacity="0.51" stroke-width="1"/><line x1="72" y1="971.5" x2="1905" y2="971.5" stroke="#fff" stroke-opacity="0.122" stroke-width="1"/><line x1="72" y1="956.5" x2="1905" y2="956.5" stroke="#fff" stroke-opacity="0.122" stroke-width="1"/><line x1="72" y1="941.5" x2="1905" y2="941.5" stroke="#fff" stroke-opacity="0.122" stroke-width="1"/><line x1="72" y1="925.5" x2="1905" y2="925.5" stroke="#fff" stroke-opacity="0.122" stroke-width="1"/><line x1="72" y1="910.5" x2="1905" y2="910.5" stroke="#fff" stroke-opacity="0.267" stroke-width="1"/><line x1="72" y1="895.5" x2="1905" y2="895.5" stroke="#fff" stroke-opacity="0.122" stroke-width="1"/><line x1="72" y1="880.5" x2="1905" y2="880.5" stroke="#fff" stroke-opacity="0.122" stroke-width="1"/><line x1="72" y1="865.5" x2="1905" y2="865.5" stroke="#fff" stroke-opacity="0.122" stroke-width="1"/><line x1="72" y1="849.5" x2="1905" y2="849.5" stroke="#fff" stroke-opacity="0.122" stroke-width="1"/><line x1="72" y1="834.5" x2="1905" y2="834.5" stroke="#fff" stroke-opacity="0.51" stroke-width="1"/><line x1="72" y1="819.5" x2="1905" y2="819.5" stroke="#fff" stroke-opacity="0.122" stroke-width="1"/><line x1="72" y1="804.5" x2="1905" y2="804.5" stroke="#fff" stroke-opacity="0.122" stroke-width="1"/><line x1="72" y1="789.5" x2="1905" y2="789.5" stroke="#fff" stroke-opacity="0.122" stroke-width="1"/><line x1="72" y1="773.5" x2="1905" y2="773.5" stroke="#fff" stroke-opacity="0.122" stroke-width="1"/><line x1="72" y1="758.5" x2="1905" y2="758.5" stroke="#fff" stroke-opacity="0.267" stroke-width="1"/><line x1="72" y1="743.5" x2="1905" y2="743.5" stroke="#fff" stroke-opacity="0.122" stroke-width="1"/><line x1="72" y1="728.5" x2="1905" y2="728.5" stroke="#fff" stroke-opacity="0.122" stroke-width="1"/><line x1="72" y1="713.5" x2="1905" y2="713.5" stroke="#fff" stroke-opacity="0.122" stroke-width="1"/><line x1="72" y1="697.5" x2="1905" y2="697.5" stroke="#fff" stroke-opacity="0.122" stroke-width="1"/><line x1="72" y1="682.5" x2="1905" y2="682.5" stroke="#fff" stroke-opacity="0.51" stroke-width="1"/><line x1="72" y1="667.5" x2="1905" y2="667.5" stroke="#fff" stroke-opacity="0.122" stroke-width="1"/><line x1="72" y1="652.5" x2="1905" y2="652.5" stroke="#fff" stroke-opacity="0.122" stroke-width="1"/><line x1="72" y1="637.5" x2="1905" y2="637.5" stroke="#fff" stroke-opacity="0.122" stroke-width="1"/><line x1="72" y1="621.5" x2="1905" y2="621.5" stroke="#fff" stroke-opacity="0.122" stroke-width="1"/><line x1="72" y1="606.5" x2="1905" y2="606.5" stroke="#fff" stroke-opacity="0.267" stroke-width="1"/><line x1="72" y1="591.5" x2="1905" y2="591.5" stroke="#fff" stroke-opacity="0.122" stroke-width="1"/><line x1="72" y1="576.5" x2="1905" y2="576.5" stroke="#fff" stroke-opacity="0.122" stroke-width="1"/><line x1="72" y1="561.5" x2="1905" y2="561.5" stroke="#fff" stroke-opacity="0.122" stroke-width="1"/><line x1="72" y1="545.5" x2="1905" y2="545.5" stroke="#fff" stroke-opacity="0.122" stroke-width="1"/><line x1="72" y1="531.5" x2="1906" y2="531.5" stroke="#888" stroke-width="1"/><line x1="1904.5" y1="531" x2="1904.5" y2="1291" stroke="#888" stroke-width="1"/><line x1="70.5" y1="529" x2="70.5" y2="1292" stroke="#e8e8e8" stroke-width="1"/><line x1="72.5" y1="531" x2="72.5" y2="1291" stroke="#777" stroke-width="1"/><rect x="70" y="1290" width="1837" height="2" fill="#f0f0f0"/></svg>
<div style="position:absolute;right:1881.5px;top:1206.02px;font-size:17px;line-height:19.55px;color:#d8d8d8;font-weight:normal;white-space:pre;text-align:right;transform-origin:100% 0;letter-spacing:-0.6px;">0.1</div>
<div style="position:absolute;left:54.394000000000005px;width:400px;top:1296.83px;font-size:17px;line-height:19.55px;color:#d8d8d8;font-weight:normal;white-space:pre;text-align:center;transform-origin:50% 0;letter-spacing:-0.6px;">0.1</div>
<div style="position:absolute;right:1881.5px;top:1130.01px;font-size:17px;line-height:19.55px;color:#d8d8d8;font-weight:normal;white-space:pre;text-align:right;transform-origin:100% 0;letter-spacing:-0.6px;">0.2</div>
<div style="position:absolute;left:237.62800000000004px;width:400px;top:1296.83px;font-size:17px;line-height:19.55px;color:#d8d8d8;font-weight:normal;white-space:pre;text-align:center;transform-origin:50% 0;letter-spacing:-0.6px;">0.2</div>
<div style="position:absolute;right:1881.5px;top:1054.00px;font-size:17px;line-height:19.55px;color:#d8d8d8;font-weight:normal;white-space:pre;text-align:right;transform-origin:100% 0;letter-spacing:-0.6px;">0.3</div>
<div style="position:absolute;left:420.86199999999997px;width:400px;top:1296.83px;font-size:17px;line-height:19.55px;color:#d8d8d8;font-weight:normal;white-space:pre;text-align:center;transform-origin:50% 0;letter-spacing:-0.6px;">0.3</div>
<div style="position:absolute;right:1881.5px;top:977.99px;font-size:17px;line-height:19.55px;color:#d8d8d8;font-weight:normal;white-space:pre;text-align:right;transform-origin:100% 0;letter-spacing:-0.6px;">0.4</div>
<div style="position:absolute;left:604.096px;width:400px;top:1296.83px;font-size:17px;line-height:19.55px;color:#d8d8d8;font-weight:normal;white-space:pre;text-align:center;transform-origin:50% 0;letter-spacing:-0.6px;">0.4</div>
<div style="position:absolute;right:1881.5px;top:901.98px;font-size:17px;line-height:19.55px;color:#d8d8d8;font-weight:normal;white-space:pre;text-align:right;transform-origin:100% 0;letter-spacing:-0.6px;">0.5</div>
<div style="position:absolute;left:787.3299999999999px;width:400px;top:1296.83px;font-size:17px;line-height:19.55px;color:#d8d8d8;font-weight:normal;white-space:pre;text-align:center;transform-origin:50% 0;letter-spacing:-0.6px;">0.5</div>
<div style="position:absolute;right:1881.5px;top:825.97px;font-size:17px;line-height:19.55px;color:#d8d8d8;font-weight:normal;white-space:pre;text-align:right;transform-origin:100% 0;letter-spacing:-0.6px;">0.6</div>
<div style="position:absolute;left:970.5640000000001px;width:400px;top:1296.83px;font-size:17px;line-height:19.55px;color:#d8d8d8;font-weight:normal;white-space:pre;text-align:center;transform-origin:50% 0;letter-spacing:-0.6px;">0.6</div>
<div style="position:absolute;right:1881.5px;top:749.96px;font-size:17px;line-height:19.55px;color:#d8d8d8;font-weight:normal;white-space:pre;text-align:right;transform-origin:100% 0;letter-spacing:-0.6px;">0.7</div>
<div style="position:absolute;left:1153.798px;width:400px;top:1296.83px;font-size:17px;line-height:19.55px;color:#d8d8d8;font-weight:normal;white-space:pre;text-align:center;transform-origin:50% 0;letter-spacing:-0.6px;">0.7</div>
<div style="position:absolute;right:1881.5px;top:673.95px;font-size:17px;line-height:19.55px;color:#d8d8d8;font-weight:normal;white-space:pre;text-align:right;transform-origin:100% 0;letter-spacing:-0.6px;">0.8</div>
<div style="position:absolute;left:1337.0320000000002px;width:400px;top:1296.83px;font-size:17px;line-height:19.55px;color:#d8d8d8;font-weight:normal;white-space:pre;text-align:center;transform-origin:50% 0;letter-spacing:-0.6px;">0.8</div>
<div style="position:absolute;right:1881.5px;top:597.94px;font-size:17px;line-height:19.55px;color:#d8d8d8;font-weight:normal;white-space:pre;text-align:right;transform-origin:100% 0;letter-spacing:-0.6px;">0.9</div>
<div style="position:absolute;left:1520.266px;width:400px;top:1296.83px;font-size:17px;line-height:19.55px;color:#d8d8d8;font-weight:normal;white-space:pre;text-align:center;transform-origin:50% 0;letter-spacing:-0.6px;">0.9</div>
<div class="w" style="position:absolute;left:788.5px;width:400px;top:497.53px;font-size:22px;line-height:25.3px;color:#ffff1e;font-weight:normal;white-space:pre;text-align:center;transform-origin:50% 0;">welco&#x0306;&#x0308;me</div>
</div></body></html>
